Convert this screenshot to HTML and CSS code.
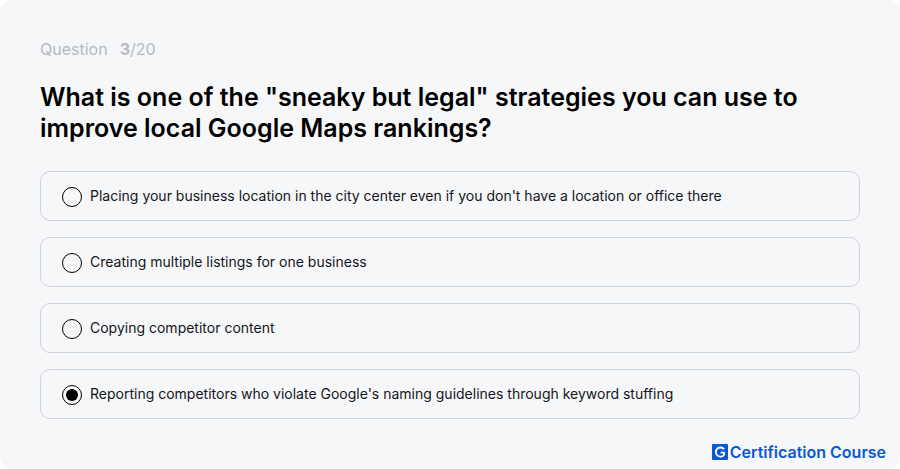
FILE: index.html
```html
<!DOCTYPE html>
<html lang="en">
<head>
<meta charset="utf-8">
<meta name="viewport" content="width=device-width, initial-scale=1">
<title>Certification Course</title>
<link rel="stylesheet" href="styles.css">
</head>
<body>
<main class="quiz">
  <p class="progress"><span>Question</span><span><b>3</b>/20</span></p>
  <form>
    <fieldset class="question">
      <legend class="title">What is one of the "sneaky but legal" strategies you can use to improve local Google Maps rankings?</legend>
      <div class="options">
        <label class="option"><input type="radio" name="answer"><span>Placing your business location in the city center even if you don't have a location or office there</span></label>
        <label class="option"><input type="radio" name="answer"><span>Creating multiple listings for one business</span></label>
        <label class="option"><input type="radio" name="answer"><span>Copying competitor content</span></label>
        <label class="option"><input type="radio" name="answer" checked><span>Reporting competitors who violate Google's naming guidelines through keyword stuffing</span></label>
      </div>
    </fieldset>
  </form>
  <footer class="brand">
    <svg class="logo" viewBox="0 0 16 16" aria-hidden="true"><rect width="16" height="16" rx="1" fill="#0b57d0"/><path d="M12 5.2A4.6 4.6 0 1 0 12 11V8.6H8.6" fill="none" stroke="#fff" stroke-width="1.8"/></svg>
    <span>Certification Course</span>
  </footer>
</main>
</body>
</html>
```

FILE: styles.css
```css
* { box-sizing: border-box; }
body { margin: 0; background: #fff; color: #14151a; font-family: Inter, sans-serif; }
.quiz { min-height: 100vh; padding: 39px 40px 0; background: #f6f7f9; border-radius: 12px; }
.progress { display: flex; gap: 12px; margin: 0 0 23px; font-size: 16px; line-height: 20px; color: #b5bac4; }
.question { margin: 0; padding: 0; border: 0; min-width: 0; }
.title { padding: 0; font-family: Inter, sans-serif; font-size: 25px; font-weight: 600; line-height: 31px; color: #000; }
.options { display: grid; gap: 16px; padding-top: 27px; }
.option { display: flex; align-items: flex-start; gap: 8px; padding: 15px 21px 13px; border: 1px solid #d1d3da; border-radius: 10px; font-size: 14px; line-height: 18px; }
.option input { appearance: none; display: grid; place-content: center; flex: none; width: 20px; height: 20px; margin: 0; border: 1px solid #000; border-radius: 50%; }
.option input:checked::before { content: ""; width: 12px; height: 12px; border-radius: 50%; background: #000; }
.brand { display: flex; justify-content: flex-end; align-items: center; gap: 2px; margin: 23px -26px 0 0; font-family: Inter, sans-serif; font-size: 16px; font-weight: 600; line-height: 20px; color: #0b57d0; }
.logo { width: 16px; height: 16px; }
```
